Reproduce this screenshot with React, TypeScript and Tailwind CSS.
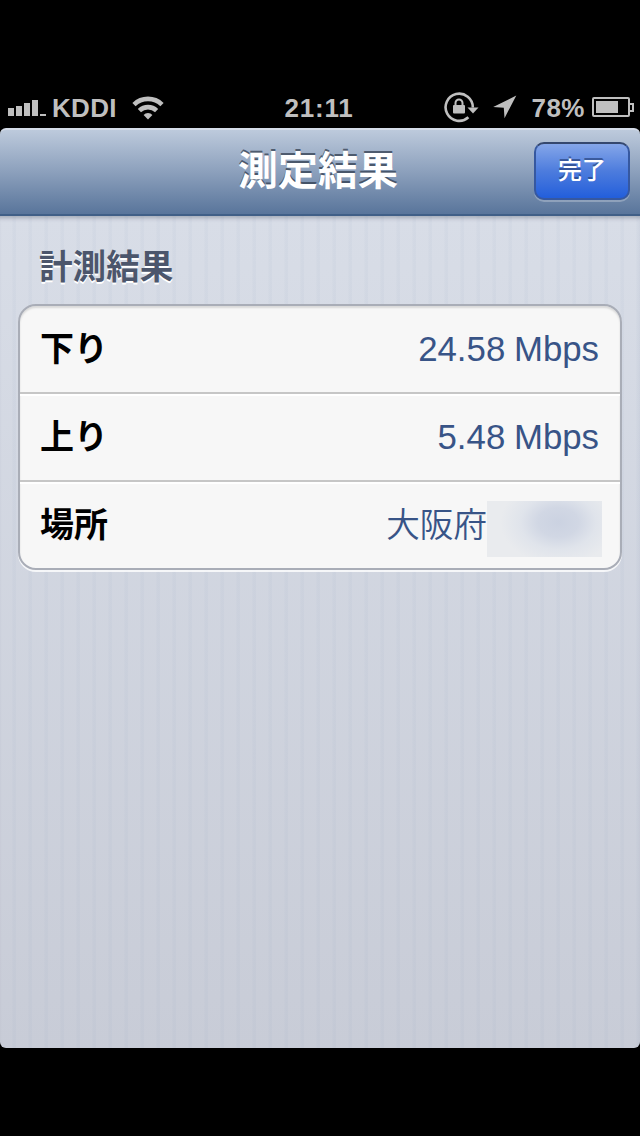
const results = [
  { label: "下り", value: "24.58 Mbps" },
  { label: "上り", value: "5.48 Mbps" },
  { label: "場所", value: "大阪府", masked: true },
];

function SignalIcon() {
  return (
    <svg width="38" height="16" viewBox="0 0 38 16" fill="currentColor">
      <rect x="0" y="8" width="6" height="8" />
      <rect x="8" y="6" width="6" height="10" />
      <rect x="16" y="3" width="6" height="13" />
      <rect x="24" y="0" width="6" height="16" />
      <rect x="32" y="14" width="6" height="2" />
    </svg>
  );
}

function WifiIcon() {
  return (
    <svg width="32" height="24" viewBox="0 0 32 24" fill="none" stroke="currentColor">
      <path d="M2 8.6a20 20 0 0 1 28 0" strokeWidth="4.6" />
      <path d="M7.4 14.6a12.5 12.5 0 0 1 17.2 0" strokeWidth="4.6" />
      <path d="M16 23.5l-4.4-4.6a6 6 0 0 1 8.8 0z" fill="currentColor" stroke="none" />
    </svg>
  );
}

function RotationLockIcon() {
  return (
    <svg width="35" height="31" viewBox="0 0 35 31" fill="none" stroke="currentColor">
      <path d="M24.4 25.3A13.6 13.6 0 1 1 28.8 15.5" strokeWidth="2.6" />
      <path d="M23.5 15.5h11l-5.5 6z" fill="currentColor" stroke="none" />
      <rect x="9" y="13" width="12" height="8.5" rx="1" fill="currentColor" stroke="none" />
      <path d="M11.5 13.5v-2.5a3.5 3.5 0 0 1 7 0v2.5" strokeWidth="2" />
    </svg>
  );
}

function LocationIcon() {
  return (
    <svg width="24" height="24" viewBox="0 0 24 24" fill="currentColor">
      <path d="M23.3 .5L11.5 23.2l-.7-10.5L.2 12z" />
    </svg>
  );
}

function BatteryIcon() {
  return (
    <svg width="42" height="20" viewBox="0 0 42 20" fill="none" stroke="currentColor" strokeWidth="2">
      <rect x="1" y="1" width="36" height="18" rx="1" />
      <path d="M38 7h3v7h-3" />
      <rect x="4" y="4" width="22" height="12" fill="currentColor" stroke="none" />
    </svg>
  );
}

function StatusBar() {
  return (
    <div className="grid h-10 grid-cols-[1fr_auto_1fr] items-center pl-2 pr-1.5 text-[26px] leading-10 font-bold text-[#bfbfbf]">
      <div className="flex items-center">
        <span>
          <SignalIcon />
        </span>
        <span className="ml-1.5 tracking-[0.3px]">KDDI</span>
        <span className="ml-[15px]">
          <WifiIcon />
        </span>
      </div>
      <span className="pr-1 tracking-[0.8px]">21:11</span>
      <div className="flex items-center justify-end">
        <span className="-mt-0.5">
          <RotationLockIcon />
        </span>
        <span className="ml-3.5 -mt-0.5">
          <LocationIcon />
        </span>
        <span className="ml-3.5 tracking-[0.5px]">78%</span>
        <span className="ml-[7px] -mt-0.5">
          <BatteryIcon />
        </span>
      </div>
    </div>
  );
}

function NavBar() {
  return (
    <header className="grid h-[88px] grid-cols-[1fr_auto_1fr] items-center rounded-t-md border-t-2 border-b-2 border-t-[#d5dce8] border-b-[#405f87] bg-linear-to-b from-[#bdcadc] via-[#8ca0bc] to-[#59759b] px-2.5">
      <h1 className="col-start-2 -mt-0.5 mr-1 text-[40px] leading-none font-bold text-white [text-shadow:0_-2px_0_rgb(50_62_80_/_0.75)]">
        測定結果
      </h1>
      <button className="-mt-0.5 h-[58px] w-24 justify-self-end rounded-[10px] border-2 border-[#3658a0] border-t-[#35486e] bg-linear-to-b from-[#85a6e9] via-[#4d7cdd] to-[#225edb] text-2xl leading-none font-medium text-white shadow-[0_2px_0_rgb(255_255_255_/_0.25)] [text-shadow:0_-2px_0_rgb(30_55_110_/_0.6)]">
        完了
      </button>
    </header>
  );
}

function MaskedText() {
  return (
    <span className="h-14 w-[115px] bg-[#e9ebee] bg-[radial-gradient(58px_42px_at_62%_38%,#cbd2e1_0%,#d1d7e4_35%,rgb(220_225_234_/_0.7)_65%,transparent_100%)]" />
  );
}

export default function App() {
  return (
    <div className="h-[1136px] w-[640px] overflow-hidden bg-black pt-[88px] font-['Liberation_Sans','Noto_Sans_CJK_JP',sans-serif]">
      <StatusBar />
      <NavBar />
      <main className="h-[832px] rounded-b-md bg-[repeating-linear-gradient(90deg,transparent_0_12px,rgb(120_145_180_/_0.05)_13px_16px),linear-gradient(#d8dde7,#c8ccd7)] px-[18px] pt-[30px] shadow-[inset_0_5px_4px_-3px_rgb(80_90_110_/_0.4)]">
        <h2 className="pl-[21px] text-[33.6px] leading-[44px] font-bold text-[#4c566c] [text-shadow:0_2px_0_#fff]">
          計測結果
        </h2>
        <div className="mt-3.5 overflow-hidden rounded-[18px] border-2 border-[#a9adb7] bg-[#f7f7f7] shadow-[0_2px_0_rgb(255_255_255_/_0.8),inset_0_2px_2px_rgb(0_0_0_/_0.12)]">
          {results.map((row, i) => (
            <div
              key={row.label}
              className={
                i === 0
                  ? "flex h-[86px] items-center justify-between pl-5 pr-[21px] text-[34px]"
                  : "flex h-[88px] items-center justify-between border-t-2 border-[#c6c6c6] pl-5 pr-[21px] text-[34px] shadow-[inset_0_2px_0_#fff]"
              }
            >
              <span className="leading-none font-bold text-black">
                {row.label}
              </span>
              {row.masked ? (
                <span className="-mr-[3px] flex items-center pt-2 font-[350] text-[#385487]">
                  <span className="pb-1.5 text-[33.6px] leading-none">
                    {row.value}
                  </span>
                  <MaskedText />
                </span>
              ) : (
                <span className="text-[34.8px] text-[#385487] [word-spacing:-1px]">
                  {row.value}
                </span>
              )}
            </div>
          ))}
        </div>
      </main>
    </div>
  );
}
